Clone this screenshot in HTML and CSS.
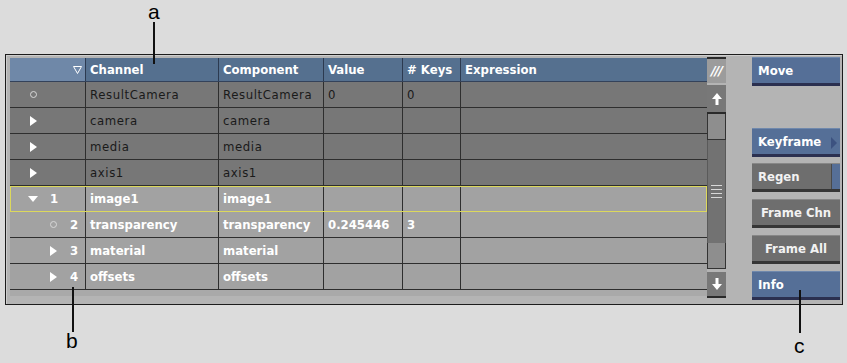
FILE: index.html
```html
<!DOCTYPE html>
<html lang="en">
<head>
  <meta charset="UTF-8">
  <title>Channel Editor</title>
  <link rel="stylesheet" href="styles.css">
</head>
<body>

<div class="page">
  <div class="panel">

    <div class="table">
      <div class="row head">
        <div class="cell lead">
          <svg width="9" height="8" viewBox="0 0 9 8"><polygon points="0.5,0.5 8.5,0.5 4.5,7.5" fill="none" stroke="#fff" stroke-width="1"/></svg>
        </div>
        <div class="cell">Channel</div>
        <div class="cell">Component</div>
        <div class="cell">Value</div>
        <div class="cell"># Keys</div>
        <div class="cell">Expression</div>
      </div>

      <div class="row dim">
        <div class="cell lead lvl0"><span class="mark"><i class="dot"></i></span></div>
        <div class="cell">ResultCamera</div>
        <div class="cell">ResultCamera</div>
        <div class="cell">0</div>
        <div class="cell">0</div>
        <div class="cell"></div>
      </div>
      <div class="row dim">
        <div class="cell lead lvl0"><span class="mark"><i class="tri"></i></span></div>
        <div class="cell">camera</div>
        <div class="cell">camera</div>
        <div class="cell"></div>
        <div class="cell"></div>
        <div class="cell"></div>
      </div>
      <div class="row dim">
        <div class="cell lead lvl0"><span class="mark"><i class="tri"></i></span></div>
        <div class="cell">media</div>
        <div class="cell">media</div>
        <div class="cell"></div>
        <div class="cell"></div>
        <div class="cell"></div>
      </div>
      <div class="row dim">
        <div class="cell lead lvl0"><span class="mark"><i class="tri"></i></span></div>
        <div class="cell">axis1</div>
        <div class="cell">axis1</div>
        <div class="cell"></div>
        <div class="cell"></div>
        <div class="cell"></div>
      </div>

      <div class="row lit sel">
        <div class="cell lead lvl0"><span class="mark"><i class="tri-down"></i></span><span class="num">1</span></div>
        <div class="cell">image1</div>
        <div class="cell">image1</div>
        <div class="cell"></div>
        <div class="cell"></div>
        <div class="cell"></div>
      </div>
      <div class="row lit">
        <div class="cell lead lvl1"><span class="mark"><i class="dot"></i></span><span class="num">2</span></div>
        <div class="cell">transparency</div>
        <div class="cell">transparency</div>
        <div class="cell">0.245446</div>
        <div class="cell">3</div>
        <div class="cell"></div>
      </div>
      <div class="row lit">
        <div class="cell lead lvl1"><span class="mark"><i class="tri"></i></span><span class="num">3</span></div>
        <div class="cell">material</div>
        <div class="cell">material</div>
        <div class="cell"></div>
        <div class="cell"></div>
        <div class="cell"></div>
      </div>
      <div class="row lit">
        <div class="cell lead lvl1"><span class="mark"><i class="tri"></i></span><span class="num">4</span></div>
        <div class="cell">offsets</div>
        <div class="cell">offsets</div>
        <div class="cell"></div>
        <div class="cell"></div>
        <div class="cell"></div>
      </div>

      <div class="table-foot"></div>
    </div>

    <div class="scroll">
      <div class="sb-top">///</div>
      <div class="sb-btn sb-up">
        <svg width="10" height="12" viewBox="0 0 10 12"><polygon points="5,0 10,6 6.5,6 6.5,12 3.5,12 3.5,6 0,6" fill="#fff"/></svg>
      </div>
      <div class="sb-page"></div>
      <div class="sb-thumb"><span class="grip"></span></div>
      <div class="sb-page"></div>
      <div class="sb-btn sb-down">
        <svg width="10" height="12" viewBox="0 0 10 12"><polygon points="5,12 10,6 6.5,6 6.5,0 3.5,0 3.5,6 0,6" fill="#fff"/></svg>
      </div>
    </div>

    <div class="buttons">
      <button class="btn blue">Move</button>
      <button class="btn blue more">Keyframe</button>
      <button class="btn grey toggle">Regen</button>
      <button class="btn grey frame">Frame Chn</button>
      <button class="btn grey frame">Frame All</button>
      <button class="btn blue info">Info</button>
    </div>

  </div>
</div>

<!-- callouts -->
<span class="note note-a">a</span>
<span class="line line-a"></span>
<span class="note note-b">b</span>
<span class="line line-b"></span>
<span class="note note-c">c</span>
<span class="line line-c"></span>

</body>
</html>
```

FILE: styles.css
```css
* { box-sizing: border-box; margin: 0; padding: 0; }
body {
  font-family: "DejaVu Sans Condensed", "DejaVu Sans", sans-serif;
  background: #dcdcdc;
  width: 847px;
  height: 363px;
  position: relative;
  overflow: hidden;
}
.page { padding: 54px 0 0 5px; }

.panel {
  width: 838px;
  height: 251px;
  border: 1px solid #1c1c1c;
  background: #b4b4b4;
  box-shadow: inset 1px 1px 0 #cdcdcd;
  display: flex;
  align-items: flex-start;
  padding: 2px 2px 0 4px;
}

/* table */
.table { width: 697px; margin-top: 1px; }
.row {
  display: grid;
  grid-template-columns: 76px 133px 105px 79px 58px 1fr;
  height: 26px;
  border-bottom: 1px solid #2e2e2e;
  font-size: 13px;
}
.cell {
  display: flex;
  align-items: center;
  padding-left: 4px;
  border-right: 1px solid #2e2e2e;
  white-space: nowrap;
  overflow: hidden;
}
.cell:last-child { border-right: none; }

.head {
  height: 24px;
  background: #55708f;
  color: #fff;
  font-weight: bold;
  border-bottom: 1px solid #34425a;
}
.head .cell { border-right-color: #2c3a50; }
.head .lead {
  background: #6f88a8;
  justify-content: flex-end;
  padding-right: 3px;
}

.dim { background: #777; color: #1a1a1a; letter-spacing: 0.6px; }
.lit { background: #a2a2a2; color: #fff; font-weight: bold; }
.sel { outline: 1px solid #dcd85c; outline-offset: -1px; }

.lead { padding-left: 0; }
.lvl0 { padding-left: 17px; }
.lvl1 { padding-left: 37px; }
.mark {
  width: 12px;
  display: flex;
  justify-content: center;
  align-items: center;
}
.num { margin-left: 11px; }

.tri {
  border-left: 7px solid #fff;
  border-top: 5px solid transparent;
  border-bottom: 5px solid transparent;
}
.tri-down {
  border-top: 6px solid #fff;
  border-left: 5px solid transparent;
  border-right: 5px solid transparent;
}
.dot {
  width: 7px;
  height: 7px;
  border: 1px solid #d8d8d8;
  border-radius: 50%;
}

.table-foot { height: 6px; background: #a9a9a9; }

/* scrollbar */
.scroll { width: 19px; display: flex; flex-direction: column; }
.sb-top {
  height: 26px;
  border-top: 2px solid #2a2a2a;
  background: #9c9c9c;
  color: #fff;
  font: italic bold 13px "DejaVu Sans", sans-serif;
  letter-spacing: -1px;
  text-align: center;
  line-height: 23px;
}
.sb-btn {
  background: #787878;
  border-bottom: 2px solid #2a2a2a;
  display: flex;
  align-items: center;
  justify-content: center;
}
.sb-up { height: 29px; margin-top: 2px; }
.sb-down { height: 26px; margin-top: 3px; }
.sb-page {
  height: 26px;
  background: #8e8e8e;
  border: 1px solid #333;
  border-top: none;
}
.sb-thumb {
  height: 103px;
  background: #727272;
  border-left: 1px solid #5a5a5a;
  border-right: 1px solid #5a5a5a;
  display: flex;
  align-items: center;
  justify-content: center;
}
.grip {
  width: 11px;
  height: 13px;
  background: repeating-linear-gradient(#d8d8d8 0 1px, transparent 1px 4px);
}

/* side buttons */
.buttons {
  width: 88px;
  margin-left: 26px;
  display: flex;
  flex-direction: column;
  gap: 6px;
}
.btn {
  height: 29px;
  border: none;
  border-bottom: 3px solid #2b3050;
  font: bold 13px "DejaVu Sans Condensed", "DejaVu Sans", sans-serif;
  color: #fff;
  text-align: left;
  padding-left: 6px;
  position: relative;
}
.blue { background: #556f97; border-top: 1px solid #6f88ac; }
.grey {
  background: #6e6e6e;
  border-top: 1px solid #878787;
  border-bottom-color: #363636;
  color: #f2f2f2;
}
.frame { text-align: center; padding-left: 0; margin-top: 1px; }
.more { margin-top: 36px; }
.more::after {
  content: "";
  position: absolute;
  right: 3px;
  top: 8px;
  border-left: 6px solid #3c5280;
  border-top: 6px solid transparent;
  border-bottom: 6px solid transparent;
}
.toggle {
  background: linear-gradient(to left, #566f97 8px, #4a4a4a 8px 9px, #6e6e6e 9px);
}
.info { margin-top: 1px; }

/* callouts */
.note {
  position: absolute;
  font: 21px "Liberation Sans", Arial, sans-serif;
  line-height: 24px;
  color: #000;
}
.note-a { left: 148px; top: 0; }
.note-b { left: 66px; top: 329px; }
.note-c { left: 794px; top: 334px; }
.line { position: absolute; width: 2px; background: #111; }
.line-a { left: 153px; top: 22px; height: 42px; }
.line-b { left: 72px; top: 287px; height: 45px; }
.line-c { left: 799px; top: 290px; height: 43px; }
```
